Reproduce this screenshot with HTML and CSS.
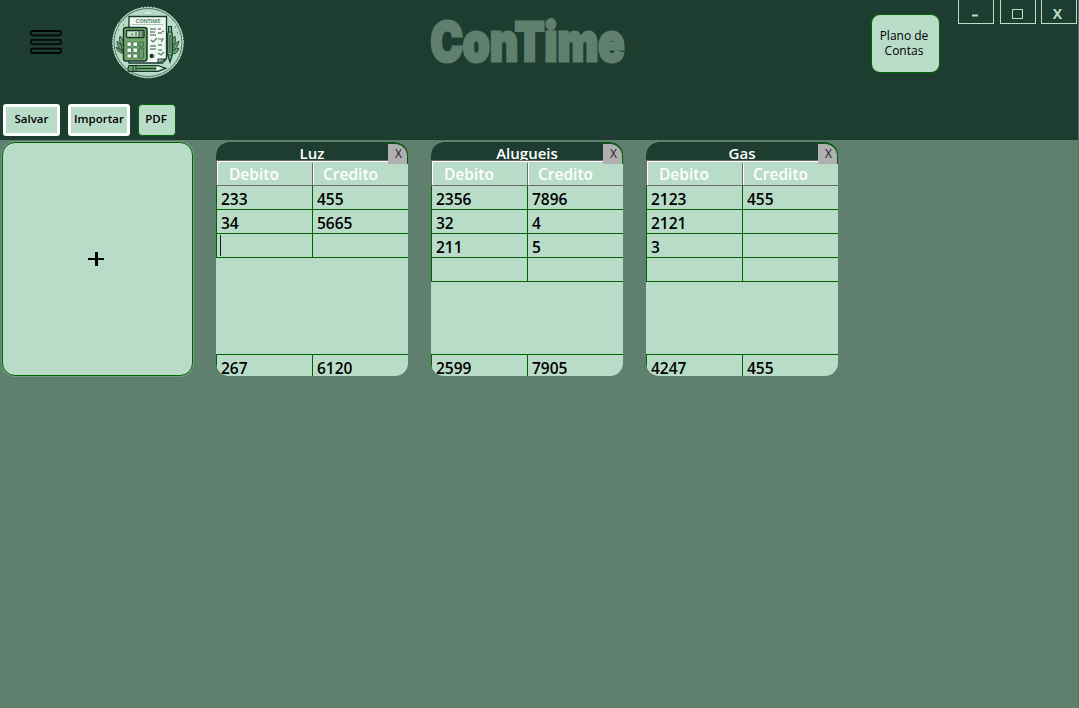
FILE: index.html
```html
<!DOCTYPE html>
<html lang="pt-BR">
<head>
<meta charset="utf-8">
<title>ConTime</title>
<link rel="stylesheet" href="styles.css">
</head>
<body>
<div class="app">
  <header class="header">
    <div class="top">
      <svg class="menu" width="32" height="24" viewBox="0 0 32 24" fill="none" stroke="#030806" stroke-width="1.8">
        <rect x="1" y="1" width="30" height="4.4" rx="1.5"/><rect x="1" y="9.8" width="30" height="4.4" rx="1.5"/><rect x="1" y="18.6" width="30" height="4.4" rx="1.5"/>
      </svg>
      <svg class="logo" width="72" height="74" viewBox="112 6 72 74">
        <circle cx="148" cy="42.500" r="35.300" fill="#b9dcc9" stroke="#dcece3" stroke-width="1" stroke-dasharray="2 1"/>
        <circle cx="148" cy="42.500" r="34" fill="none" stroke="#315d49" stroke-width=".8"/>
        <path d="M121 21q5-3 8-4M143 14q3-5 6-2 4-1 5 2zM161 14h5v3h4" fill="#e4f2ea" stroke="#8bb59d" stroke-width=".5"/>
        <path d="M119 22h1M123 25h1M118 30h1M172 20h1M175 27h1M177 33h1M123 20h1" stroke="#2d5945" stroke-width="1"/>
        <g fill="#69a06d" stroke="#173a2d" stroke-width=".8">
          <path d="M120 36q5 4 3 10-5-3-3-10zM117 41q5 3 6 10-6-3-6-10zM121 53q-4-2-5-6 6 2 7 6z"/>
          <path d="M175 36q-5 4-3 10 5-3 3-10zM179 41q-6 3-7 10 6-3 7-10zM175 54q4-3 4-6-6 1-7 5z"/>
        </g>
        <path d="M129 16.500h37.500v42l-4 4.500H129z" fill="#f0f8f3" stroke="#163a2d" stroke-width="1.300"/>
        <path d="M158 63v-4h8z" fill="#9dc8ae" stroke="#163a2d"/>
        <text class="logo-text" x="135.500" y="22.800" textLength="25">CONTIME</text>
        <path d="M132 24.500h31" stroke="#8eaa94" stroke-width=".7"/>
        <path d="M150 29h6m-6 3h5m-5 3h6m-6 11h6m-6 3h6m2-20h3m-3 4h4m-4 12h4m-4 5h4" stroke="#315044" stroke-width="1"/>
        <path d="M151 40l2 2 4-4m1 1h5l-2 3m-3 11l3 2 3-3m-2-21l2 1" fill="none" stroke="#4b8052" stroke-width="1.200"/>
        <circle cx="151.700" cy="56" r="2.200" fill="#173a2d"/><path d="M153 54q3 1 1 4" fill="#76ac78"/>
        <rect x="123.500" y="27.500" width="23.500" height="33.500" rx="2.500" fill="#71a767" stroke="#153629" stroke-width="1.500"/>
        <rect x="126.500" y="30.500" width="17.500" height="7" rx="1" fill="#c9e1c7" stroke="#153629" stroke-width="1.300"/>
        <path d="M131 35l2-1m3-2v4m2-4h2v2h-2m2 0v2h-2m3-4h2v4h-2m0-2h2" fill="none" stroke="#173a2d" stroke-width=".8"/>
        <g fill="#f0f8f3" stroke="#254b34" stroke-width=".6">
          <rect x="127" y="42" width="4.500" height="4.500" rx=".7"/><rect x="133" y="42" width="4.500" height="4.500" rx=".7"/><rect x="139" y="42" width="4.500" height="4.500" rx=".7" fill="#69a06d"/>
          <rect x="127" y="48" width="4.500" height="4.500" rx=".7"/><rect x="133" y="48" width="4.500" height="4.500" rx=".7"/><rect x="139" y="48" width="4.500" height="10" rx=".7" fill="#69a06d"/>
          <rect x="127" y="54" width="4.500" height="4" rx=".7"/><rect x="133" y="54" width="4.500" height="4" rx=".7"/>
        </g>
        <path d="M168.500 31v-4.500h3V31l.8 3v21l-2.300 7-2.300-7V34z" fill="#80b48e" stroke="#153629" stroke-width="1.200"/>
        <path d="M168 32h4M168 55h4M170 35v18" stroke="#153629" stroke-width=".8"/>
        <path d="M129 65.500h29l8 2.800-8 3.200h-29q-2-2.500 0-6z" fill="#69a06d" stroke="#153629" stroke-width="1.200"/>
        <path d="M156.500 66l6.500 2.300-6.500 2.500z" fill="#f0f8f3"/><path d="M133 65.500v6m3-6v6M137 68.500h19" stroke="#153629" stroke-width=".9"/>
      </svg>
      <svg class="brand" width="200" height="56" viewBox="0 0 200 56">
        <text class="brand-text" x="3.500" y="45" textLength="194" lengthAdjust="spacingAndGlyphs">ConTime</text>
      </svg>
      <button class="plan">Plano de<br>Contas</button>
      <div class="window-buttons">
        <button class="window-button"><svg width="34" height="24"><path d="M13 15.500h6" stroke="#b9dcc9" stroke-width="2"/></svg></button>
        <button class="window-button"><svg width="34" height="24"><rect x="11.500" y="9.500" width="10" height="9" fill="none" stroke="#b9dcc9"/></svg></button>
        <button class="window-button close">X</button>
      </div>
    </div>
    <nav class="toolbar">
      <button class="tool save">Salvar</button><button class="tool import">Importar</button><button class="tool pdf">PDF</button>
    </nav>
  </header>
  <main class="board">
    <button class="add"><svg width="16" height="16"><path d="M0 8h16" stroke="#000" stroke-width="2"/><path d="M8.500 1v14" stroke="#000" stroke-width="3"/></svg></button>
    <section class="card">
      <div class="title">Luz</div><button class="remove">X</button>
      <div class="heads"><span class="head">Debito</span><span class="head">Credito</span></div>
      <div class="row"><span class="cell">233</span><span class="cell">455</span></div>
      <div class="row"><span class="cell">34</span><span class="cell">5665</span></div>
      <div class="row"><span class="cell"><i class="caret"></i></span><span class="cell"></span></div>
      <div class="totals"><span class="cell">267</span><span class="cell">6120</span></div>
    </section>
    <section class="card">
      <div class="title">Alugueis</div><button class="remove">X</button>
      <div class="heads"><span class="head">Debito</span><span class="head">Credito</span></div>
      <div class="row"><span class="cell">2356</span><span class="cell">7896</span></div>
      <div class="row"><span class="cell">32</span><span class="cell">4</span></div>
      <div class="row"><span class="cell">211</span><span class="cell">5</span></div>
      <div class="row"><span class="cell"></span><span class="cell"></span></div>
      <div class="totals"><span class="cell">2599</span><span class="cell">7905</span></div>
    </section>
    <section class="card">
      <div class="title">Gas</div><button class="remove">X</button>
      <div class="heads"><span class="head">Debito</span><span class="head">Credito</span></div>
      <div class="row"><span class="cell">2123</span><span class="cell">455</span></div>
      <div class="row"><span class="cell">2121</span><span class="cell"></span></div>
      <div class="row"><span class="cell">3</span><span class="cell"></span></div>
      <div class="row"><span class="cell"></span><span class="cell"></span></div>
      <div class="totals"><span class="cell">4247</span><span class="cell">455</span></div>
    </section>
  </main>
</div>
</body>
</html>
```
FILE: styles.css
```css
* { box-sizing: border-box; }
body { margin: 0; font-family: "Open Sans", "Noto Sans", sans-serif; overflow: hidden; }
button { font-family: inherit; padding: 0; margin: 0; color: #000; }
.app { width: 1079px; height: 708px; background: #5f806f; border-right: 1px solid #3c8062; display: flex; flex-direction: column; }
.header { height: 140px; background: #1e3d31; flex: none; }
.top { height: 104px; display: flex; align-items: flex-start; }
.menu { margin: 30px 50px 0 30px; flex: none; }
.logo { margin-top: 6px; flex: none; }
.logo-text { font: 700 5.5px "Open Sans", sans-serif; fill: #568862; }
.brand { margin: 16px 0 0 243px; flex: none; overflow: visible; }
.brand-text { font-family: Inter, sans-serif; font-weight: 900; font-size: 53px; fill: #5f806f; stroke: #5f806f; stroke-width: 3px; }
.plan { width: 69px; height: 59px; margin: 14px 0 0 244px; border: 1px solid #006400; border-radius: 9px; background: #b9dcc9; font-size: 12px; line-height: 15px; padding: 0 3px 2px 0; flex: none; }
.window-buttons { display: flex; gap: 6px; margin-left: 18px; }
.window-button { width: 36px; height: 24px; border: 1px solid #b9dcc9; border-top: 0; background: none; display: flex; align-items: center; justify-content: center; color: #b9dcc9; }
.window-button svg { flex: none; }
.close { font-size: 14px; font-weight: 700; margin-left: -1px; padding: 4px 3px 0 0; }
.toolbar { display: flex; padding-left: 3px; align-items: flex-start; }
.tool { height: 32px; background: #b9dcc9; border: 3px solid #fff; border-radius: 3px; font-size: 11.5px; font-weight: 600; line-height: 24px; padding-bottom: 2px; }
.save { width: 57px; margin-right: 8px; }
.import { width: 62px; margin-right: 8px; }
.pdf { width: 38px; border: 1px solid #006400; border-radius: 4px; padding: 0 2px 3px 0; }
.board { display: flex; align-items: flex-start; padding: 2px 0 0 2px; }
.add { width: 191px; height: 234px; margin: 0 23px 0 0; border: 1px solid #006400; border-radius: 13px; background: #b9dcc9; display: flex; align-items: center; justify-content: center; box-shadow: 0 0 0 1px #799686; }
.add svg { margin-left: -4px; }
.card { position: relative; width: 192px; height: 234px; margin-right: 23px; border-radius: 13px; overflow: hidden; background: #b9dcc9; display: flex; flex-direction: column; font-size: 15.5px; font-weight: 600; }
.title { height: 18px; flex: none; background: #1e3d31; color: #fff; text-align: center; line-height: 23px; font-size: 15px; overflow: hidden; }
.remove { position: absolute; z-index: 1; top: 1px; right: 0; width: 20px; height: 21px; background: #b0b0b0; border: 0; border-top: 1px solid #006400; border-right: 1px solid #006400; border-radius: 0 13px 0 0; font-size: 12px; color: #222; padding: 0 0 1px 2px; }
.heads { height: 26px; flex: none; display: flex; border-top: 1px solid #696969; border-bottom: 1px solid #696969; border-left: 1px solid #696969; box-shadow: inset 1px 1px #fff; color: #fff; }
.head { width: 95px; height: 22px; margin-top: 2px; line-height: 22px; font-size: 15.5px; }
.head:first-child { width: 96px; border-right: 1px solid #696969; padding-left: 12px; box-shadow: 1px 0 #fff; flex: none; }
.head:last-child { padding-left: 10px; }
.row, .totals { height: 24px; flex: none; display: flex; border-bottom: 1px solid #006400; border-left: 1px solid #006400; }
.cell { width: 95px; padding-left: 4px; line-height: 27px; }
.cell:first-child { width: 96px; border-right: 1px solid #006400; }
.totals { height: 22px; margin-top: auto; border-bottom: 0; border-top: 1px solid #006400; }
.caret { display: block; width: 1px; height: 21px; background: #202020; margin: 1px 0 0 -1px; }
```
